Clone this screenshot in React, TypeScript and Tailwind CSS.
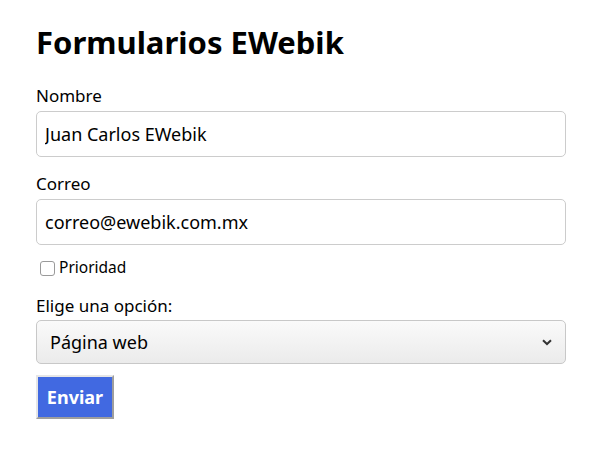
import * as React from "react"

const font = { fontFamily: '"Noto Sans", "Open Sans", sans-serif' }

export default function App() {
  return (
    <div className="min-h-[462px] bg-white pl-[36px] pt-[22px] text-black" style={font}>
      <div className="w-[530px]">
        <h1 className="text-[31px] font-bold leading-[40px]">Formularios EWebik</h1>

        <label className="mt-[22px] block text-[17px] leading-[24px]">Nombre</label>
        <input
          className="mt-[3px] block h-[46px] w-full rounded-[5px] border border-[#cccccc] px-[8px] text-[18px] outline-none"
          defaultValue="Juan Carlos EWebik"
        />

        <label className="mt-[15px] block text-[17px] leading-[24px]">Correo</label>
        <input
          className="mt-[3px] block h-[46px] w-full rounded-[5px] border border-[#cccccc] px-[8px] text-[18px] outline-none"
          defaultValue="correo@ewebik.com.mx"
        />

        <label className="mt-[13px] flex h-[20px] items-center text-[15.5px]">
          <span className="ml-[4px] mr-[4px] h-[15px] w-[15px] rounded-[3px] border border-[#9a9a9a] bg-white" />
          Prioridad
        </label>

        <label className="mt-[16px] block text-[17px] leading-[24px]">Elige una opción:</label>
        <div className="relative mt-[2px]">
          <select
            className="block h-[44px] w-full appearance-none rounded-[5px] border border-[#c8c8c8] bg-gradient-to-b from-[#fafafa] to-[#ebebeb] pl-[13px] text-[18px] outline-none"
            defaultValue="web"
          >
            <option value="web">Página web</option>
          </select>
          <svg
            className="pointer-events-none absolute right-[14px] top-[19px]"
            width="10"
            height="7"
            viewBox="0 0 10 7"
          >
            <path d="M1 1.2 L5 5 L9 1.2" fill="none" stroke="#333" strokeWidth="2" />
          </svg>
        </div>

        <button className="mt-[11px] h-[44px] w-[78px] border-2 border-t-[#e6e6e6] border-l-[#e6e6e6] border-b-[#9e9e9e] border-r-[#9e9e9e] bg-[#4169e1] text-[18px] font-bold text-white">
          Enviar
        </button>
      </div>
    </div>
  )
}
